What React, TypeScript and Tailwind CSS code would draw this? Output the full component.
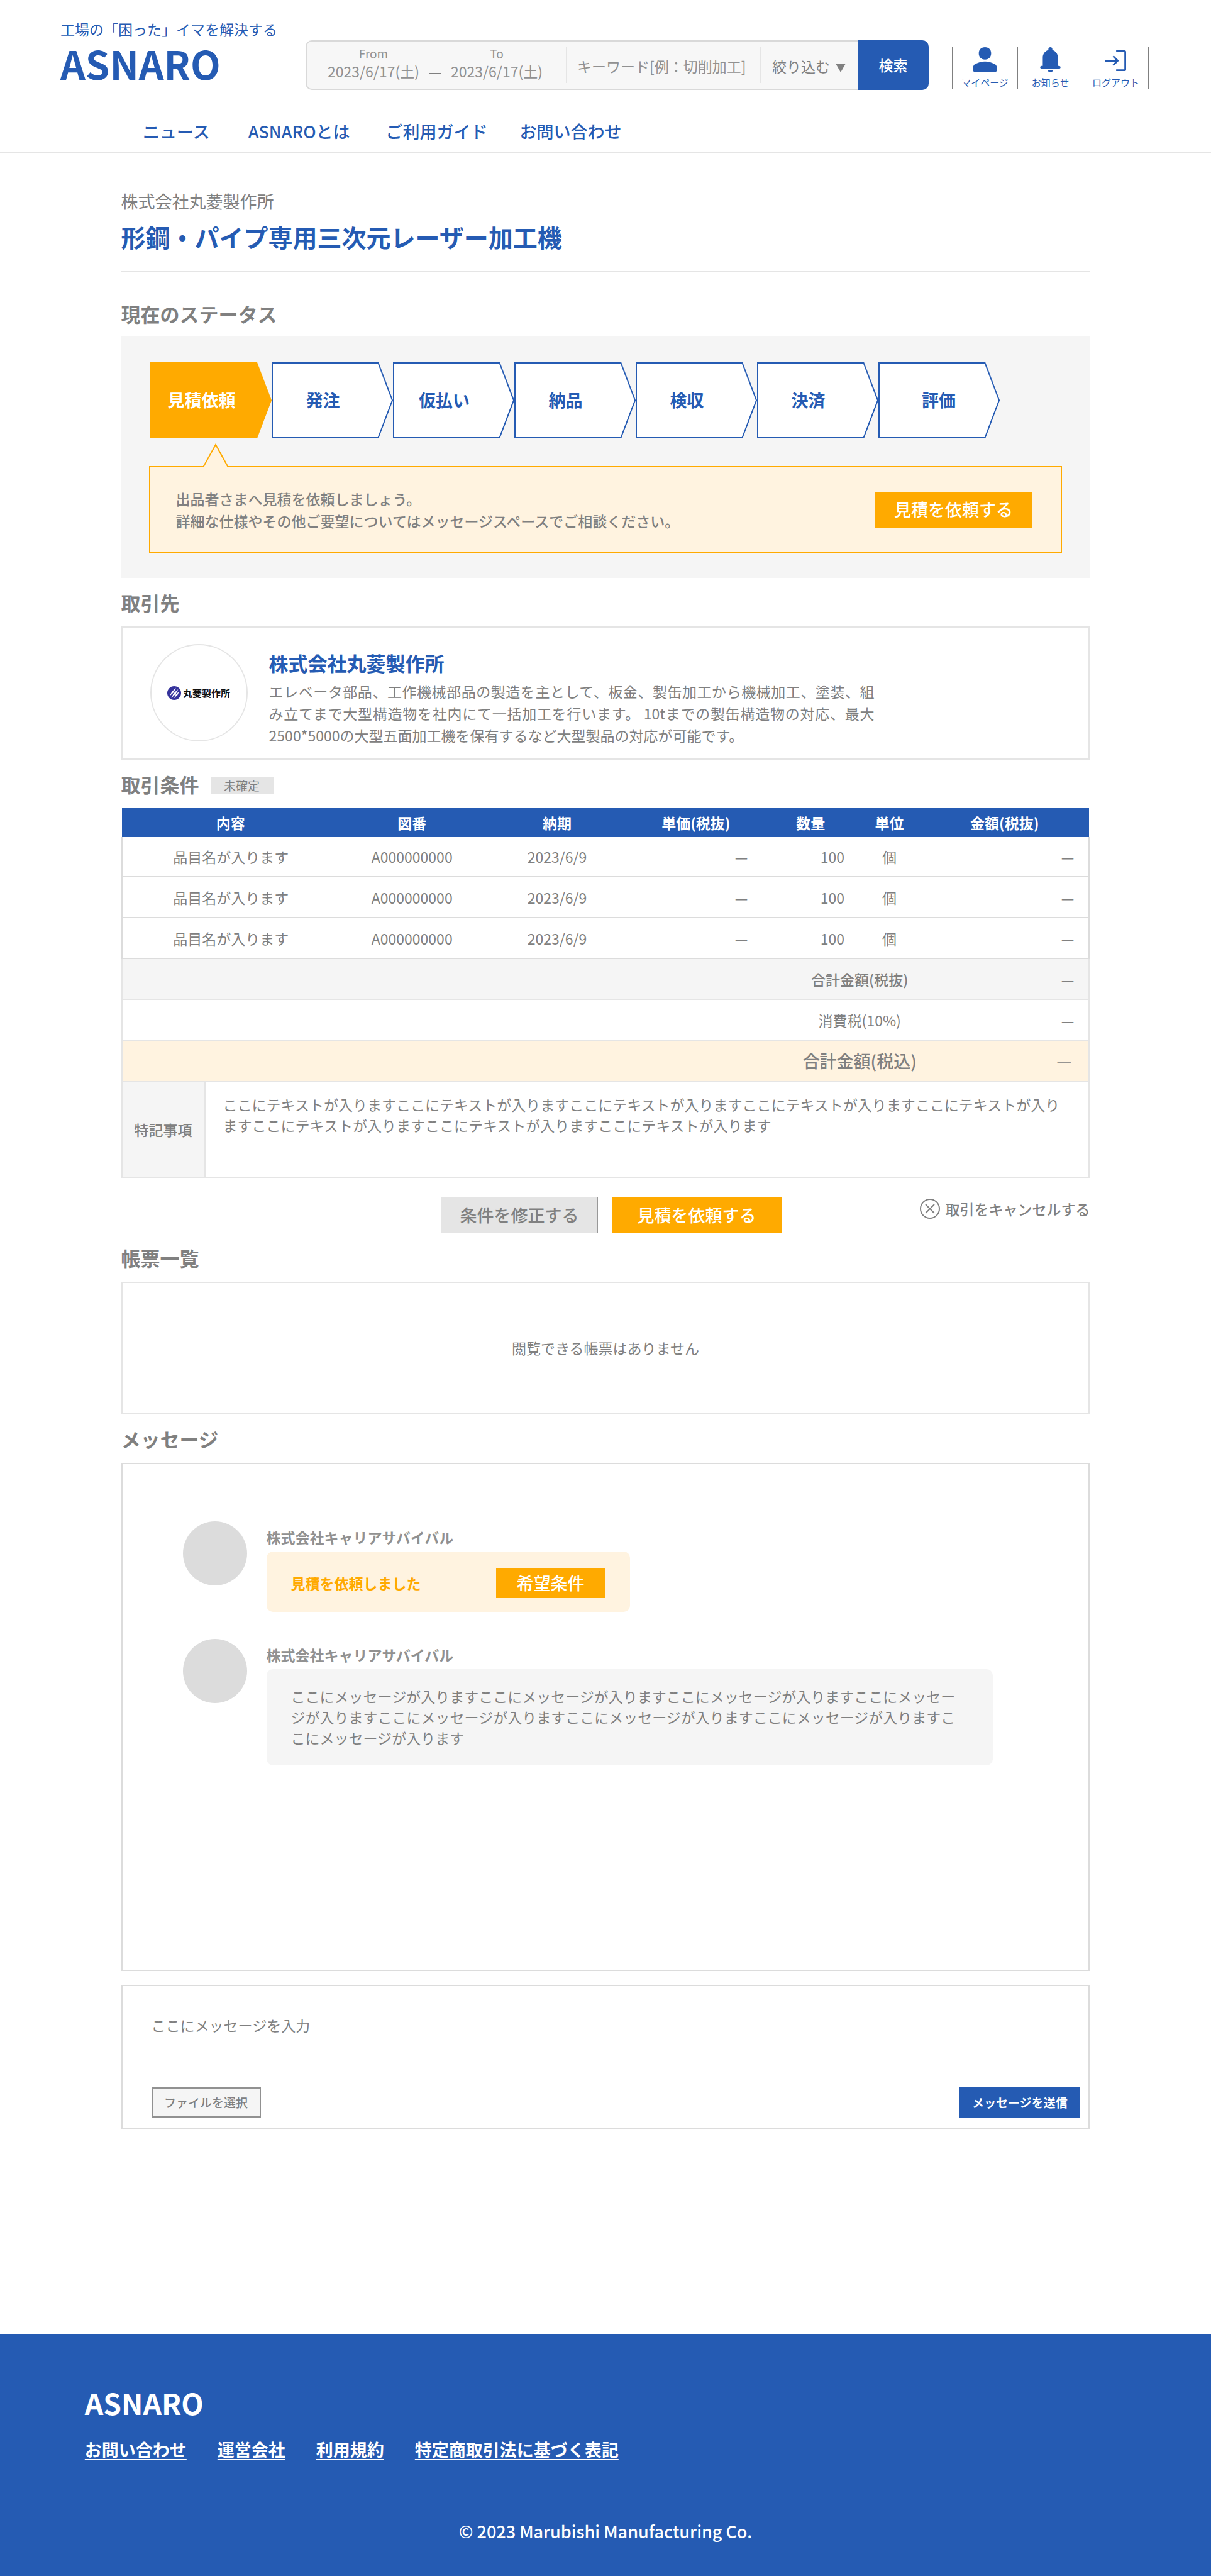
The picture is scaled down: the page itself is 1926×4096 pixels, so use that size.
import React from "react";

const navItems = [
  { label: "ニュース", gap: "mr-[61px]" },
  { label: "ASNAROとは", gap: "mr-[57px]" },
  { label: "ご利用ガイド", gap: "mr-[51px]" },
  { label: "お問い合わせ", gap: "" },
];

const steps = ["見積依頼", "発注", "仮払い", "納品", "検収", "決済", "評価"];

const rows = [
  { id: 1, height: "h-[63px]" },
  { id: 2, height: "h-[65px]" },
  { id: 3, height: "h-[65px]" },
].map((row) => ({
  ...row,
  name: "品目名が入ります",
  code: "A000000000",
  date: "2023/6/9",
  price: "—",
  qty: "100",
  unit: "個",
  amount: "—",
}));

const footerLinks = ["お問い合わせ", "運営会社", "利用規約", "特定商取引法に基づく表記"];

function PersonIcon() {
  return (
    <svg viewBox="0 0 61 63" className="h-10 w-[39px] fill-[#255bb3]" aria-hidden="true">
      <path d="M30.5 0C40 0 46 6 46 15.500C46 25 40 31 30.500 31C21 31 15 25 15 15.500C15 6 21 0 30.500 0Z" />
      <path d="M30.5 36C39 36 47 38.500 53 41.500C58 44 61 48 61 53V55C61 60 58 63 53 63H8C3 63 0 60 0 55V53C0 48 3 44 8 41.500C14 38.500 22 36 30.500 36Z" />
    </svg>
  );
}

function BellIcon() {
  return (
    <svg viewBox="0 0 51 63" className="h-10 w-[33px] fill-[#255bb3]" aria-hidden="true">
      <path d="M20.5 7V5C20.500 2 22.500 0 25.500 0C28.500 0 30.500 2 30.500 5V7C39 9.500 44.500 17 44.500 26V47H47.500C49.500 47 51 48.500 51 50.500C51 52.500 49.500 54 47.500 54H3.500C1.500 54 0 52.500 0 50.500C0 48.500 1.500 47 3.500 47H6.500V26C6.500 17 12 9.500 20.500 7Z" />
      <path d="M19 57H32C32 60.500 29 63 25.500 63C22 63 19 60.500 19 57Z" />
    </svg>
  );
}

function LogoutIcon() {
  return (
    <svg viewBox="0 -8 52 63" className="h-10 w-[33px] fill-none stroke-[#255bb3]" strokeWidth="4.4" aria-hidden="true">
      <path d="M27 2.200H47.800C49 2.200 49.800 3 49.800 4.200V47.800C49.800 49 49 49.800 47.800 49.800H27" />
      <path d="M0 26H31M19.500 14.500L31 26L19.500 37.500" />
    </svg>
  );
}

function MarubishiLogo() {
  return (
    <div className="flex items-center gap-[3px]">
      <svg viewBox="0 0 102 102" className="h-[22px] w-[22px]" aria-hidden="true">
        <circle cx="51" cy="51" r="51" fill="#35339c" />
        <g fill="#fff">
          <path d="M17 74L33 43L64 12L49 44Z" />
          <path d="M30 88L46 54L81 22L64 56Z" />
          <path d="M49 90L63 62L89 37L76 65Z" />
        </g>
      </svg>
      <span className="text-[15px] leading-[22px] font-bold whitespace-nowrap text-[#111]">丸菱製作所</span>
    </div>
  );
}

function SectionTitle({ children }: { children: React.ReactNode }) {
  return <h2 className="text-[31px] leading-[44px] font-bold">{children}</h2>;
}

function DateField({ id, label }: { id: string; label: string }) {
  return (
    <div className="flex w-[150px] flex-col items-center text-[#919191]">
      <label htmlFor={id} className="text-[19px] leading-6">
        {label}
      </label>
      <input
        id={id}
        type="text"
        defaultValue="2023/6/17(土)"
        className="mt-[2px] h-7 w-full bg-transparent text-center text-[23px] leading-7 outline-none"
      />
    </div>
  );
}

function IconLink({ label, children }: { label: string; children: React.ReactNode }) {
  return (
    <a href="#" className="flex h-[67px] w-[104px] flex-col items-center border-l border-[#808080]">
      {children}
      <span className="mt-[7px] text-[15px] leading-[18px] whitespace-nowrap">{label}</span>
    </a>
  );
}

function Header() {
  return (
    <header className="border-b-2 border-[#e5e5e5] text-[#255bb3]">
      <div className="flex items-start pr-[99px] pl-24">
        <div className="w-[390px] shrink-0 pt-[30px]">
          <p className="text-[23px] leading-8 whitespace-nowrap">工場の「困った」イマを解決する</p>
          <a href="#" className="mt-2 block text-[62px] leading-[60px] font-bold">
            ASNARO
          </a>
        </div>
        <form className="mt-16 flex h-[79px] min-w-0 flex-1" onSubmit={(e) => e.preventDefault()}>
          <div className="flex min-w-0 flex-1 rounded-l-[10px] border-2 border-r-0 border-[#d9d9d9] bg-[#f7f7f7]">
            <div className="flex shrink-0 gap-[13px] pt-[7px] pr-[35px] pl-[31px]">
              <DateField id="from" label="From" />
              <span className="mt-[43px] h-[2px] w-5 bg-[#808080]" />
              <DateField id="to" label="To" />
            </div>
            <div className="my-[9px] flex min-w-0 flex-1 border-x-2 border-[#e5e5e5]">
              <input
                type="text"
                aria-label="キーワード"
                placeholder="キーワード[例：切削加工]"
                className="min-w-0 flex-1 bg-transparent pt-1 pl-4 text-[23px] text-[#919191] outline-none placeholder:text-[#919191]"
              />
            </div>
            <div className="relative w-[154px] shrink-0">
              <select
                aria-label="絞り込む"
                className="h-full w-full appearance-none bg-transparent pt-1 pl-[18px] text-[23px] text-[#808080] outline-none"
              >
                <option>絞り込む</option>
              </select>
              <svg viewBox="0 0 16 14" className="pointer-events-none absolute top-[35px] right-[19px] h-[14px] w-4 fill-[#808080]" aria-hidden="true">
                <path d="M0 0H16L8 14Z" />
              </svg>
            </div>
          </div>
          <button type="submit" className="w-[113px] shrink-0 rounded-r-[10px] bg-[#255bb3] text-[23px] font-medium text-white">
            検索
          </button>
        </form>
        <div className="mt-[75px] ml-[37px] flex shrink-0 border-r border-[#808080]">
          <IconLink label="マイページ">
            <PersonIcon />
          </IconLink>
          <IconLink label="お知らせ">
            <BellIcon />
          </IconLink>
          <IconLink label="ログアウト">
            <LogoutIcon />
          </IconLink>
        </div>
      </div>
      <nav className="mt-[46px] flex pb-3 pl-[227px] text-[27px] leading-10 font-medium">
        {navItems.map((item) => (
          <a key={item.label} href="#" className={item.gap}>
            {item.label}
          </a>
        ))}
      </nav>
    </header>
  );
}

function Step({ label, active, last }: { label: string; active: boolean; last: boolean }) {
  return (
    <li
      className={`relative flex h-[121px] w-[193px] items-center justify-center text-[27px] font-bold ${
        active ? "text-white" : "text-[#255bb3]"
      } ${last ? "" : "pr-[29px]"}`}
    >
      <svg viewBox="0 0 193 121" className="absolute inset-0 h-full w-full" aria-hidden="true">
        {active ? (
          <path d="M0 0H170L193 60.500L170 121H0Z" fill="#ffaa00" />
        ) : (
          <path d="M1 1H169.500L192 60.500L169.500 120H1Z" fill="#fff" stroke="#255bb3" strokeWidth="2" />
        )}
      </svg>
      <span className="relative">{label}</span>
    </li>
  );
}

function StatusPanel() {
  return (
    <section className="pt-11">
      <SectionTitle>現在のステータス</SectionTitle>
      <div className="mt-[13px] bg-[#f5f5f5] px-11 pt-[42px] pb-[39px]">
        <ol className="ml-[2px] flex">
          {steps.map((s, i) => (
            <Step key={s} label={s} active={i === 0} last={i === steps.length - 1} />
          ))}
        </ol>
        <div className="relative mt-11 flex h-[139px] items-center justify-between border-2 border-[#ffaa00] bg-[#fff3e0] pr-[46px] pl-[41px]">
          <svg viewBox="0 0 42 38" className="absolute -top-[38px] left-[83px] h-[38px] w-[42px]" aria-hidden="true">
            <path d="M1 38L21 2L41 38" fill="#fff3e0" stroke="#ffaa00" strokeWidth="2" />
          </svg>
          <p className="text-[23px] leading-[35px] font-medium">
            出品者さまへ見積を依頼しましょう。
            <br />
            詳細な仕様やその他ご要望についてはメッセージスペースでご相談ください。
          </p>
          <button className="h-[58px] w-[250px] bg-[#ffaa00] text-[27px] font-medium text-white">見積を依頼する</button>
        </div>
      </div>
    </section>
  );
}

function PartnerPanel() {
  return (
    <section className="pt-[17px]">
      <SectionTitle>取引先</SectionTitle>
      <div className="mt-4 flex h-[212px] items-start border-2 border-[#e5e5e5] pl-11">
        <div className="mt-[26px] flex h-[155px] w-[155px] shrink-0 items-center justify-center rounded-full border-2 border-[#e5e5e5]">
          <MarubishiLogo />
        </div>
        <div className="ml-[34px] max-w-[963px] pt-[34px]">
          <h3 className="text-[31px] leading-[44px] font-bold text-[#255bb3]">株式会社丸菱製作所</h3>
          <p className="mt-[6px] text-justify text-[23px] leading-[35px]">
            エレベータ部品、工作機械部品の製造を主として、板金、製缶加工から機械加工、塗装、組み立てまで大型構造物を社内にて一括加工を行います。
            10tまでの製缶構造物の対応、最大2500*5000の大型五面加工機を保有するなど大型製品の対応が可能です。
          </p>
        </div>
      </div>
    </section>
  );
}

function TermsTable() {
  return (
    <section className="pt-[17px]">
      <div className="flex items-center">
        <SectionTitle>取引条件</SectionTitle>
        <span className="mt-1 ml-[18px] flex h-7 w-[100px] items-center justify-center bg-[#e5e5e5] text-[19px] leading-7">未確定</span>
      </div>
      <table className="mt-4 w-full table-fixed border-collapse text-center text-[23px] leading-8">
        <colgroup>
          <col className="w-[22.5%]" />
          <col className="w-[15%]" />
          <col className="w-[15%]" />
          <col className="w-[13.7%]" />
          <col className="w-[10%]" />
          <col className="w-[6.3%]" />
          <col className="w-[17.5%]" />
        </colgroup>
        <thead>
          <tr className="h-[46px] bg-[#255bb3] text-white">
            {["内容", "図番", "納期", "単価(税抜)", "数量", "単位", "金額(税抜)"].map((h) => (
              <th key={h} scope="col" className="p-0 font-bold whitespace-nowrap">
                {h}
              </th>
            ))}
          </tr>
        </thead>
        <tbody className="border-x-2 border-[#dcdcdc]">
          {rows.map((r) => (
            <tr key={r.id} className={`border-b-2 border-[#dcdcdc] ${r.height}`}>
              <td>{r.name}</td>
              <td>{r.code}</td>
              <td>{r.date}</td>
              <td className="pr-[23px] text-right">{r.price}</td>
              <td className="pr-[23px] text-right">{r.qty}</td>
              <td>{r.unit}</td>
              <td className="pr-[23px] text-right">{r.amount}</td>
            </tr>
          ))}
        </tbody>
        <tbody className="border-x-2 border-[#e5e5e5]">
          <tr className="h-[65px] border-y-2 border-[#e5e5e5] bg-[#f5f5f5]">
            <td colSpan={3} />
            <th scope="row" colSpan={3} className="pl-[270px] font-medium whitespace-nowrap">
              合計金額(税抜)
            </th>
            <td className="pr-[23px] text-right">—</td>
          </tr>
          <tr className="h-[65px] border-b-2 border-[#e5e5e5]">
            <td colSpan={3} />
            <th scope="row" colSpan={3} className="pl-[270px] font-normal whitespace-nowrap">
              消費税(10%)
            </th>
            <td className="pr-[23px] text-right">—</td>
          </tr>
          <tr className="h-[66px] border-b-2 border-[#e5e5e5] bg-[#fff3e0] text-[27px]">
            <td colSpan={3} />
            <th scope="row" colSpan={3} className="pl-[270px] font-medium whitespace-nowrap">
              合計金額(税込)
            </th>
            <td className="pr-[27px] text-right">—</td>
          </tr>
        </tbody>
      </table>
      <dl className="flex h-[152px] border-2 border-t-0 border-[#e5e5e5] text-[23px]">
        <dt className="flex w-[132px] shrink-0 items-center justify-center border-r-2 border-[#e5e5e5] bg-[#f5f5f5] font-medium">特記事項</dt>
        <dd className="pt-[19px] pr-9 pl-7 leading-[33px]">
          ここにテキストが入りますここにテキストが入りますここにテキストが入りますここにテキストが入りますここにテキストが入りますここにテキストが入りますここにテキストが入りますここにテキストが入ります
        </dd>
      </dl>
      <div className="mt-[30px] flex items-start">
        <div className="w-[33%]" />
        <button className="h-[58px] w-[250px] border border-[#999] bg-[#e5e5e5] text-[27px] font-medium">条件を修正する</button>
        <button className="ml-[22px] h-[58px] w-[270px] bg-[#ffaa00] text-[27px] font-medium text-white">見積を依頼する</button>
        <button className="mt-[3px] ml-auto flex items-center gap-2 text-[23px] leading-8 font-medium">
          <svg viewBox="0 0 32 32" className="h-8 w-8 fill-none stroke-[#808080] stroke-2" aria-hidden="true">
            <circle cx="16" cy="16" r="15" />
            <path d="M9 9L23 23M23 9L9 23" />
          </svg>
          取引をキャンセルする
        </button>
      </div>
    </section>
  );
}

function Documents() {
  return (
    <section className="pt-[17px]">
      <SectionTitle>帳票一覧</SectionTitle>
      <div className="mt-4 flex h-[211px] items-center justify-center border-2 border-[#e5e5e5] text-[23px]">閲覧できる帳票はありません</div>
    </section>
  );
}

function Message({ children }: { children: React.ReactNode }) {
  return (
    <li className="flex items-start">
      <span className="h-[102px] w-[102px] shrink-0 rounded-full bg-[#dcdcdc]" />
      <div className="ml-[31px] pt-[10px]">
        <p className="mb-2 text-[23px] leading-[30px] font-bold text-[#919191]">株式会社キャリアサバイバル</p>
        {children}
      </div>
    </li>
  );
}

function Messages() {
  return (
    <section className="pt-[17px]">
      <SectionTitle>メッセージ</SectionTitle>
      <ul className="mt-4 flex min-h-[808px] flex-col gap-[43px] border-2 border-[#dcdcdc] pt-[91px] pr-[152px] pl-24">
        <Message>
          <div className="flex h-[96px] w-[578px] items-center justify-between rounded-[10px] bg-[#fff3e0] px-[39px] pt-1">
            <span className="text-[23px] font-bold text-[#ffaa00]">見積を依頼しました</span>
            <button className="h-12 w-[174px] bg-[#ffaa00] text-[27px] font-medium text-white">希望条件</button>
          </div>
        </Message>
        <Message>
          <p className="rounded-[10px] bg-[#f5f5f5] px-[39px] py-[27px] text-[23px] leading-[33px]">
            ここにメッセージが入りますここにメッセージが入りますここにメッセージが入りますここにメッセージが入りますここにメッセージが入りますここにメッセージが入りますここにメッセージが入りますここにメッセージが入ります
          </p>
        </Message>
      </ul>
      <form className="mt-[22px] border-2 border-[#dcdcdc] pt-[46px] pr-[13px] pb-[17px] pl-[46px]" onSubmit={(e) => e.preventDefault()}>
        <textarea
          aria-label="メッセージ"
          placeholder="ここにメッセージを入力"
          className="block h-[115px] w-full resize-none bg-transparent text-[23px] leading-[33px] outline-none placeholder:text-[#808080]"
        />
        <div className="flex justify-between">
          <label className="relative flex h-12 w-[174px] cursor-pointer items-center justify-center border-2 border-[#919191] bg-[#f5f5f5] text-[19px] font-medium">
            ファイルを選択
            <input type="file" className="sr-only" />
          </label>
          <button type="submit" className="h-12 w-[193px] bg-[#255bb3] text-[19px] font-bold text-white">
            メッセージを送信
          </button>
        </div>
      </form>
    </section>
  );
}

function Footer() {
  return (
    <footer className="mt-[325px] bg-[#255bb3] pt-[79px] pb-[51px] text-white">
      <div className="px-[7%]">
        <p className="text-[46px] leading-[60px] font-bold">ASNARO</p>
        <nav className="mt-[25px] flex gap-[49px] text-[27px] leading-10 font-bold">
          {footerLinks.map((l) => (
            <a key={l} href="#" className="underline decoration-2 underline-offset-4">
              {l}
            </a>
          ))}
        </nav>
      </div>
      <p className="mt-[90px] text-center text-[27px] leading-10 font-medium">© 2023 Marubishi Manufacturing Co.</p>
    </footer>
  );
}

export default function App() {
  return (
    <div lang="ja" className="bg-white font-['Noto_Sans_CJK_JP',sans-serif] text-[#808080]">
      <Header />
      <main className="mx-auto w-4/5">
        <div className="border-b-2 border-[#e5e5e5] pt-[57px] pb-[27px]">
          <p className="text-[27px] leading-10">株式会社丸菱製作所</p>
          <h1 className="mt-2 text-[39px] leading-[56px] font-bold text-[#255bb3]">形鋼・パイプ専用三次元レーザー加工機</h1>
        </div>
        <StatusPanel />
        <PartnerPanel />
        <TermsTable />
        <Documents />
        <Messages />
      </main>
      <Footer />
    </div>
  );
}
